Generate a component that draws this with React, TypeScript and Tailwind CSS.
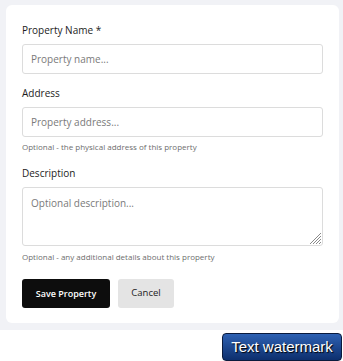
import React from 'react';

const font = { fontFamily: '"Open Sans", "Noto Sans", sans-serif' };

const inputCls =
  'h-[30px] w-full rounded-[3px] border border-[#dcdcdc] px-[8px] text-[10px] text-[#1c1c1c] outline-none placeholder:text-[#7a7a7a]';

const PropertyForm = () => {
  return (
    <div className="min-h-[361px] bg-white" style={font}>
      <div className="h-[330px] bg-[#f1f2f6] pt-[5px] pl-[6px] pr-[4px]">
        <div className="flex h-[318px] flex-col rounded-[6px] bg-white px-[16px] pt-[18px]">
          <label className="text-[10px] leading-[14px] text-[#1c1c1c]">Property Name *</label>
          <input type="text" placeholder="Property name..." className={`mt-[7px] ${inputCls}`} />

          <label className="mt-[12px] text-[10px] leading-[14px] text-[#1c1c1c]">Address</label>
          <input type="text" placeholder="Property address..." className={`mt-[7px] ${inputCls}`} />
          <p className="mt-[4px] text-[8px] leading-[12px] text-[#6e6e6e]">
            Optional - the physical address of this property
          </p>

          <label className="mt-[13px] text-[10px] leading-[14px] text-[#1c1c1c]">Description</label>
          <div className="relative mt-[7px]">
            <textarea
              placeholder="Optional description..."
              className="block h-[59px] w-full resize-none rounded-[3px] border border-[#dcdcdc] px-[8px] py-[8px] text-[10px] leading-[14px] text-[#1c1c1c] outline-none placeholder:text-[#7a7a7a]"
            />
            <svg
              className="pointer-events-none absolute right-[2px] bottom-[2px]"
              width="12"
              height="12"
              viewBox="0 0 12 12"
            >
              <g stroke="#8a8a8a" strokeWidth="1">
                <line x1="1" y1="12" x2="12" y2="1" />
                <line x1="4" y1="12" x2="12" y2="4" />
                <line x1="7" y1="12" x2="12" y2="7" />
                <line x1="10" y1="12" x2="12" y2="10" />
              </g>
            </svg>
          </div>
          <p className="mt-[5px] text-[8px] leading-[12px] text-[#6e6e6e]">
            Optional - any additional details about this property
          </p>

          <div className="mt-[16px] flex gap-[8px]">
            <button className="h-[29px] w-[88px] rounded-[3px] bg-[#0d0d0d] text-[9px] font-semibold text-white">
              Save Property
            </button>
            <button className="h-[29px] w-[56px] rounded-[3px] bg-[#e4e4e4] text-[9.5px] text-[#1c1c1c]">
              Cancel
            </button>
          </div>
        </div>
      </div>

      <div className="mt-[3px] flex justify-end pr-px">
        <div
          className="flex h-[28px] w-[120px] items-center justify-center rounded-[4px] border border-[#0b1b3d] bg-gradient-to-b from-[#2f62b3] to-[#0d2f6e] text-[15px] text-white [text-shadow:1px_1px_1px_#000]"
          style={{ fontFamily: '"Liberation Sans", Arial, sans-serif' }}
        >
          Text watermark
        </div>
      </div>
    </div>
  );
};

export default PropertyForm;
